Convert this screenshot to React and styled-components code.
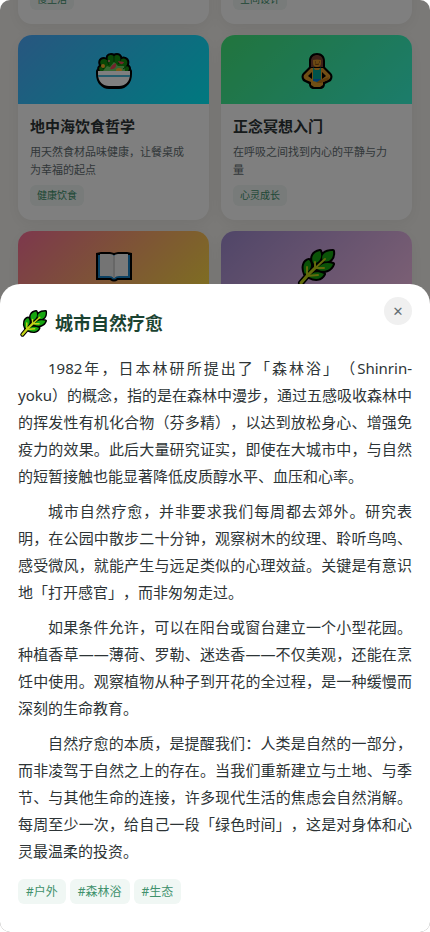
import styled, { createGlobalStyle } from 'styled-components';

const GlobalStyle = createGlobalStyle`
  * {
    box-sizing: border-box;
  }

  body {
    margin: 0;
    background: #fff;
    color: #2d3436;
    font-family: "Noto Sans", "Noto Sans CJK SC", sans-serif;
    text-spacing-trim: space-all;
  }

  h2, h3, p {
    margin: 0;
  }
`;

const topics = [
  { tag: '慢生活' },
  { tag: '空间设计' },
  {
    title: '地中海饮食哲学',
    text: '用天然食材品味健康，让餐桌成为幸福的起点',
    tag: '健康饮食',
    icon: SaladIcon,
    from: '#4facfe',
    to: '#00f2fe',
  },
  {
    title: '正念冥想入门',
    text: '在呼吸之间找到内心的平静与力量',
    tag: '心灵成长',
    icon: LotusIcon,
    from: '#43e97b',
    to: '#38f9d7',
  },
  { icon: BookIcon, from: '#fa709a', to: '#fee140' },
  { icon: HerbIcon, from: '#a18cd1', to: '#fbc2eb' },
];

const paragraphs = [
  '1982年，日本林研所提出了「森林浴」（Shinrin-yoku）的概念，指的是在森林中漫步，通过五感吸收森林中的挥发性有机化合物（芬多精），以达到放松身心、增强免疫力的效果。此后大量研究证实，即使在大城市中，与自然的短暂接触也能显著降低皮质醇水平、血压和心率。',
  '城市自然疗愈，并非要求我们每周都去郊外。研究表明，在公园中散步二十分钟，观察树木的纹理、聆听鸟鸣、感受微风，就能产生与远足类似的心理效益。关键是有意识地「打开感官」，而非匆匆走过。',
  '如果条件允许，可以在阳台或窗台建立一个小型花园。种植香草——薄荷、罗勒、迷迭香——不仅美观，还能在烹饪中使用。观察植物从种子到开花的全过程，是一种缓慢而深刻的生命教育。',
  '自然疗愈的本质，是提醒我们：人类是自然的一部分，而非凌驾于自然之上的存在。当我们重新建立与土地、与季节、与其他生命的连接，许多现代生活的焦虑会自然消解。每周至少一次，给自己一段「绿色时间」，这是对身体和心灵最温柔的投资。',
];

const tags = ['#户外', '#森林浴', '#生态'];

function App() {
  return (
    <Page lang="zh-CN">
      <GlobalStyle />
      <Grid>
        {topics.map(({ title, text, tag, icon: Icon, from, to }, i) => (
          <Card key={i}>
            {Icon && (
              <Cover $from={from} $to={to}>
                <Icon />
              </Cover>
            )}
            <CardBody>
              {title && <CardTitle>{title}</CardTitle>}
              {text && <CardText>{text}</CardText>}
              {tag && <CardTag>{tag}</CardTag>}
            </CardBody>
          </Card>
        ))}
      </Grid>
      <Overlay>
        <Sheet role="dialog" aria-modal="true" aria-labelledby="sheet-title">
          <Close type="button" aria-label="关闭">✕</Close>
          <SheetHead>
            <HerbIcon />
            <SheetTitle id="sheet-title">城市自然疗愈</SheetTitle>
          </SheetHead>
          <Article>
            {paragraphs.map((text) => (
              <p key={text}>{text}</p>
            ))}
          </Article>
          <Tags>
            {tags.map((tag) => (
              <Tag key={tag}>{tag}</Tag>
            ))}
          </Tags>
        </Sheet>
      </Overlay>
    </Page>
  );
}

function SaladIcon() {
  return (
    <svg viewBox="0 0 36 36" aria-hidden="true">
      <g fill="#118a0f" stroke="#000" strokeWidth="4" strokeLinejoin="round">
        <path d="M4 18C2 15 4 13 6 13C3 10 4 6 8 6C10 6 11 7 12 8C11 4 12 2 15 2C17 2 18 3 18 5C18 3 19 2 21 2C24 2 25 5 24 8C25 6 27 5 29 6C32 7 32 11 30 13C33 13 34 16 32 18V19H4Z" />
        <path d="M2 18H34V21C34 29 29 34 23 34H13C7 34 2 29 2 21Z" />
      </g>
      <path d="M4 18C2 15 4 13 6 13C3 10 4 6 8 6C10 6 11 7 12 8C11 4 12 2 15 2C17 2 18 3 18 5C18 3 19 2 21 2C24 2 25 5 24 8C25 6 27 5 29 6C32 7 32 11 30 13C33 13 34 16 32 18V19H4Z" fill="#13900f" />
      <path d="M7 18L11 13L14 14L18 9L22 13L28 13L29 18Z" fill="#6cce63" />
      <path d="M11 8L13 12M18 4V9M25 7L22 11M4 13L8 16M31 13L27 16" fill="none" stroke="#064f0a" strokeWidth="1" />
      <circle cx="7" cy="13" r="2" fill="#ffb02e" />
      <ellipse cx="23" cy="17" rx="3" ry="2" fill="#ffb02e" />
      <path d="M14 16C15 13 17 11 20 10C21 14 18 17 14 16ZM22 8L28 9C27 12 24 12 22 8Z" fill="#e74856" />
      <circle cx="13" cy="8" r="1" fill="#f0818b" />
      <path d="M2 18H34V21C34 29 29 33 23 33H13C7 33 2 29 2 21Z" fill="#fff" />
      <path d="M2 22H34V24H2Z" fill="#49b8d9" />
    </svg>
  );
}

function LotusIcon() {
  return (
    <svg viewBox="0 0 36 36" aria-hidden="true">
      <path d="M18 0C13 0 10 3 10 8V14L4 20C2 22 2 25 4 28L10 31C10 34 12 36 15 36H21C24 36 26 34 26 31L32 28C34 25 34 22 32 20L26 14V8C26 3 23 0 18 0Z" fill="#000" />
      <path d="M12 14V8C12 0 24 0 24 8V14Z" fill="#7d4533" />
      <path d="M14 7Q18 6 22 7V10Q22 14 18 14Q14 14 14 10Z" fill="#d99525" />
      <path d="M16 9H17M20 9H21M16 11Q18 12 20 11" fill="none" stroke="#704018" />
      <path d="M12 15L5 22C4 24 5 26 7 27L12 29V32L15 34H21L24 32V29L29 27C31 26 32 24 31 22L24 15Z" fill="#e09c2b" />
      <path d="M13 19L9 23L13 26ZM23 19L27 23L23 26Z" fill="#000" />
      <path d="M14 14L16 17H20L22 14V27H14Z" fill="#00a898" />
      <path d="M14 26H22V28L18 29L14 28Z" fill="#0078d7" />
      <path d="M17 30L21 27L30 24L29 27L22 30Z" fill="#bd7814" />
    </svg>
  );
}

function BookIcon() {
  return (
    <svg viewBox="0 0 36 36" aria-hidden="true">
      <path d="M0 4L5 3H14L18 4L22 3H31L36 4V31H22Q18 34 14 31H0Z" fill="#000" />
      <path d="M2 6H34V29H21Q18 32 15 29H2Z" fill="#1683c7" />
      <path d="M4 5H14Q17 5 18 7V29Q16 27 13 27H4Z" fill="#e8e8e8" />
      <path d="M32 5H22Q19 5 18 7V29Q20 27 23 27H32Z" fill="#f5f5f5" />
      <path d="M17 7H19V29H17Z" fill="#cfcfcf" />
    </svg>
  );
}

function HerbIcon() {
  const leaves = 'M24 12C21 6 26 2 34 2C35 9 31 14 24 12ZM15 15C11 9 14 3 21 2C24 8 21 13 15 15ZM6 25C3 18 5 12 10 11C14 16 12 21 6 25ZM18 20C22 14 28 13 34 15C32 21 25 24 18 20ZM10 28C13 23 18 22 25 25C22 31 16 31 10 28Z';
  const stem = 'M2 34L8 27L26 10M16 19V13M8 27V18M16 19H25M8 27L19 26';
  return (
    <svg viewBox="0 0 36 36" aria-hidden="true">
      <g stroke="#000" strokeLinejoin="round" strokeLinecap="round">
        <path d={leaves} fill="#000" strokeWidth="4" />
        <path d={stem} fill="none" strokeWidth="6" />
      </g>
      <path d={leaves} fill="#16a610" />
      <path d={stem} fill="none" stroke="#c3d316" strokeWidth="2" strokeLinecap="round" />
      <path d="M2 34L8 27L16 19" fill="none" stroke="#c3d316" strokeWidth="3" strokeLinecap="round" />
    </svg>
  );
}

const Page = styled.main`
  position: relative;
  height: 100vh;
  overflow: hidden;
  border-radius: 10px;
  background: #f5f3ef;
`;

const Grid = styled.div`
  display: grid;
  grid-template-columns: repeat(2, minmax(0, 1fr));
  gap: 11px 12px;
  margin-top: -23px;
  padding: 0 18px;
`;

const Card = styled.article`
  overflow: hidden;
  border-radius: 14px;
  background: #fff;
  box-shadow: 0 4px 16px rgba(0, 0, 0, 0.06);
`;

const Cover = styled.div`
  display: grid;
  place-items: center;
  height: 69px;
  padding-top: 2px;
  background: linear-gradient(135deg, ${props => props.$from}, ${props => props.$to});

  svg {
    width: 36px;
    height: 36px;
    overflow: visible;
  }
`;

const CardBody = styled.div`
  padding: 12px 16px 14px 12px;
`;

const CardTitle = styled.h3`
  margin-bottom: 7px;
  font-size: 15px;
  line-height: 20px;
`;

const CardText = styled.p`
  margin-bottom: 6px;
  color: #636e72;
  font-size: 11px;
  line-height: 18px;
`;

const CardTag = styled.span`
  display: block;
  width: fit-content;
  padding: 3px 7px;
  border-radius: 6px;
  background: #f0f7f4;
  color: #40916c;
  font-size: 10px;
  line-height: 15px;
`;

const Overlay = styled.div`
  position: absolute;
  inset: 0;
  display: flex;
  align-items: flex-end;
  background: rgba(0, 0, 0, 0.5);
`;

const Sheet = styled.section`
  position: relative;
  width: 100%;
  padding: 24px 18px 28px;
  border-radius: 20px 20px 0 0;
  background: #fff;
`;

const Close = styled.button`
  position: absolute;
  top: 13px;
  right: 18px;
  width: 28px;
  height: 28px;
  padding: 0;
  border: none;
  border-radius: 50%;
  background: #f0f0f0;
  color: #636e72;
  font-family: "DejaVu Sans", sans-serif;
  font-size: 13px;
  font-weight: 700;
  cursor: pointer;
`;

const SheetHead = styled.header`
  display: flex;
  align-items: center;
  gap: 8px;
  margin-bottom: 17px;
  padding-left: 3px;

  svg {
    width: 26px;
    height: 26px;
    overflow: visible;
  }
`;

const SheetTitle = styled.h2`
  color: #1b4332;
  font-size: 18px;
  line-height: 30px;
`;

const Article = styled.div`
  display: grid;
  gap: 8px;
  font-size: 15px;
  line-height: 27px;
  text-align: justify;
  text-indent: 2em;
`;

const Tags = styled.div`
  display: flex;
  gap: 4px;
  margin-top: 14px;
`;

const Tag = styled.span`
  padding: 4px 8px;
  border-radius: 6px;
  background: #f0f7f4;
  color: #40916c;
  font-size: 12px;
  line-height: 17px;
`;

export default App;
